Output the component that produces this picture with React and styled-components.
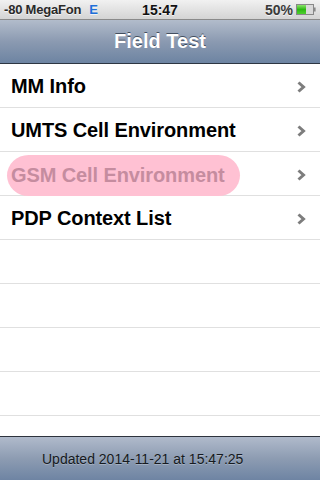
import React from "react";
import styled, { createGlobalStyle } from "styled-components";

const GlobalStyle = createGlobalStyle`
  html, body {
    margin: 0;
    padding: 0;
    background: #fff;
  }
  body {
    font-family: "Liberation Sans", Arial, sans-serif;
  }
`;

const Screen = styled.div`
  width: 320px;
  height: 480px;
  display: flex;
  flex-direction: column;
  overflow: hidden;
  background: #fff;
`;

const StatusBar = styled.div`
  height: 20px;
  flex: none;
  display: grid;
  grid-template-columns: 1fr auto 1fr;
  align-items: center;
  padding: 0 4px;
  box-sizing: border-box;
  background: linear-gradient(#f1f1f1, #d4d4d4);
  border-bottom: 1px solid #8a8a8a;
  font-size: 14px;
  font-weight: bold;
  color: #2a2a2a;
  text-shadow: 0 1px 0 rgba(255, 255, 255, 0.7);
`;

const Carrier = styled.div`
  display: flex;
  align-items: center;
  font-size: 13px;
  letter-spacing: -0.2px;
`;

const Network = styled.span`
  color: #1f6fd8;
  margin-left: 8px;
  font-size: 13px;
`;

const Clock = styled.div`
  text-align: center;
  color: #111;
`;

const Battery = styled.div`
  display: flex;
  justify-content: flex-end;
  align-items: center;
  gap: 3px;
  color: #3a3a3a;
`;

const NavBar = styled.div`
  height: 44px;
  flex: none;
  display: flex;
  align-items: center;
  justify-content: center;
  background: linear-gradient(#b2bccb, #8b9ab1 50%, #6d84a2);
  border-bottom: 1px solid #2d3642;
  box-sizing: border-box;
  color: #fff;
  font-size: 20px;
  font-weight: bold;
  text-shadow: 0 -1px 0 rgba(40, 50, 65, 0.75);
`;

const List = styled.div`
  flex: 1;
  overflow: hidden;
`;

const Row = styled.div`
  height: 44px;
  box-sizing: border-box;
  border-bottom: 1px solid #e0e0e0;
  display: flex;
  align-items: center;
  justify-content: space-between;
  padding: 2px 14px 0 11px;
`;

const Label = styled.span`
  font-size: 20px;
  font-weight: bold;
  color: ${p => (p.$marked ? "#c58c9f" : "#000")};
  background: ${p => (p.$marked ? "#ffc1d3" : "transparent")};
  margin: ${p => (p.$marked ? "2px 0 0 -4px" : "0")};
  padding: ${p => (p.$marked ? "9px 15px 9px 4px" : "0")};
  border-radius: ${p => (p.$marked ? "22px / 21px" : "0")};
  letter-spacing: -0.1px;
`;

const Toolbar = styled.div`
  height: 44px;
  flex: none;
  box-sizing: border-box;
  display: flex;
  align-items: center;
  padding-left: 42px;
  background: linear-gradient(#b0bacb, #8d9cb2 50%, #6e84a3);
  border-top: 1px solid #2d333d;
  font-size: 14px;
  color: #161a20;
  text-shadow: 0 1px 0 rgba(255, 255, 255, 0.25);
`;

const Chevron = () => (
  <svg width="9" height="12" viewBox="0 0 9 12">
    <path d="M1.5 1.5 L6.5 6 L1.5 10.5" fill="none" stroke="#7d7d7d" strokeWidth="3" strokeLinejoin="miter" />
  </svg>
);

const BatteryIcon = () => (
  <svg width="20" height="11" viewBox="0 0 20 11">
    <defs>
      <linearGradient id="juice" x1="0" y1="0" x2="0" y2="1">
        <stop offset="0" stopColor="#8be36b" />
        <stop offset="0.5" stopColor="#2cb812" />
        <stop offset="1" stopColor="#4fd02f" />
      </linearGradient>
    </defs>
    <rect x="0.5" y="0.5" width="17" height="10" fill="#d9d9d9" stroke="#888" />
    <rect x="1" y="1" width="9" height="9" fill="url(#juice)" />
    <rect x="18" y="3.5" width="1.6" height="4" fill="#888" />
  </svg>
);

const rows = [
  { label: "MM Info" },
  { label: "UMTS Cell Environment" },
  { label: "GSM Cell Environment", marked: true },
  { label: "PDP Context List" },
];

export default function App() {
  return (
    <Screen>
      <GlobalStyle />
      <StatusBar>
        <Carrier>
          -80 MegaFon<Network>E</Network>
        </Carrier>
        <Clock>15:47</Clock>
        <Battery>
          50%
          <BatteryIcon />
        </Battery>
      </StatusBar>
      <NavBar>Field Test</NavBar>
      <List>
        {rows.map(r => (
          <Row key={r.label}>
            <Label $marked={r.marked}>{r.label}</Label>
            <Chevron />
          </Row>
        ))}
        {[0, 1, 2, 3].map(i => (
          <Row key={`empty-${i}`} />
        ))}
      </List>
      <Toolbar>Updated 2014-11-21 at 15:47:25</Toolbar>
    </Screen>
  );
}
